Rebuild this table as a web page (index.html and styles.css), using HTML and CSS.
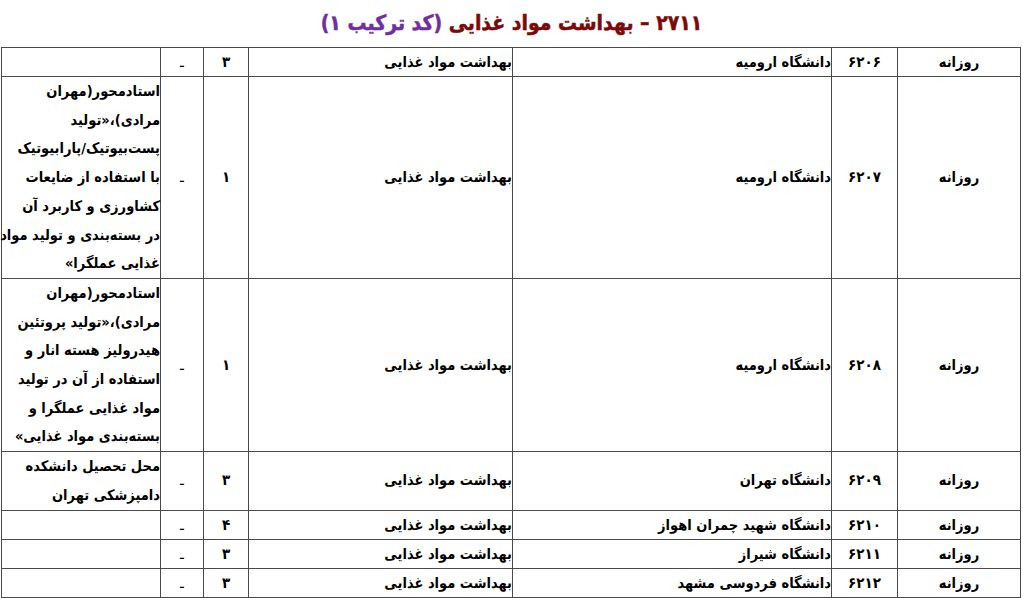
FILE: index.html
```html
<!DOCTYPE html>
<html lang="fa" dir="rtl">
<head>
<meta charset="utf-8">
<title>۲۷۱۱ – بهداشت مواد غذایی</title>
<link rel="stylesheet" href="styles.css">
</head>
<body>
<div class="page">
  <h1 class="title"><span class="title-main">۲۷۱۱ – بهداشت مواد غذایی</span> <span class="title-code">(کد ترکیب ۱)</span></h1>
  <table class="grid">
    <colgroup>
      <col class="c-type">
      <col class="c-code">
      <col class="c-uni">
      <col class="c-field">
      <col class="c-cap">
      <col class="c-dash">
      <col class="c-note">
    </colgroup>
    <tbody>
      <tr class="r-short">
        <td class="center">روزانه</td>
        <td class="center num">۶۲۰۶</td>
        <td class="start">دانشگاه ارومیه</td>
        <td class="start">بهداشت مواد غذایی</td>
        <td class="center num">۳</td>
        <td class="center dash">ـ</td>
        <td class="start note"></td>
      </tr>
      <tr>
        <td class="center">روزانه</td>
        <td class="center num">۶۲۰۷</td>
        <td class="start">دانشگاه ارومیه</td>
        <td class="start">بهداشت مواد غذایی</td>
        <td class="center num">۱</td>
        <td class="center dash">ـ</td>
        <td class="start note">استادمحور(مهران<br>مرادی)،«تولید<br>پست‌بیوتیک/پارابیوتیک<br>با استفاده از ضایعات<br>کشاورزی و کاربرد آن<br>در بسته‌بندی و تولید مواد<br>غذایی عملگرا»</td>
      </tr>
      <tr>
        <td class="center">روزانه</td>
        <td class="center num">۶۲۰۸</td>
        <td class="start">دانشگاه ارومیه</td>
        <td class="start">بهداشت مواد غذایی</td>
        <td class="center num">۱</td>
        <td class="center dash">ـ</td>
        <td class="start note">استادمحور(مهران<br>مرادی)،«تولید پروتئین<br>هیدرولیز هسته انار و<br>استفاده از آن در تولید<br>مواد غذایی عملگرا و<br>بسته‌بندی مواد غذایی»</td>
      </tr>
      <tr>
        <td class="center">روزانه</td>
        <td class="center num">۶۲۰۹</td>
        <td class="start">دانشگاه تهران</td>
        <td class="start">بهداشت مواد غذایی</td>
        <td class="center num">۳</td>
        <td class="center dash">ـ</td>
        <td class="start note">محل تحصیل دانشکده<br>دامپزشکی تهران</td>
      </tr>
      <tr class="r-short">
        <td class="center">روزانه</td>
        <td class="center num">۶۲۱۰</td>
        <td class="start">دانشگاه شهید چمران اهواز</td>
        <td class="start">بهداشت مواد غذایی</td>
        <td class="center num">۴</td>
        <td class="center dash">ـ</td>
        <td class="start note"></td>
      </tr>
      <tr class="r-short">
        <td class="center">روزانه</td>
        <td class="center num">۶۲۱۱</td>
        <td class="start">دانشگاه شیراز</td>
        <td class="start">بهداشت مواد غذایی</td>
        <td class="center num">۳</td>
        <td class="center dash">ـ</td>
        <td class="start note"></td>
      </tr>
      <tr class="r-short">
        <td class="center">روزانه</td>
        <td class="center num">۶۲۱۲</td>
        <td class="start">دانشگاه فردوسی مشهد</td>
        <td class="start">بهداشت مواد غذایی</td>
        <td class="center num">۳</td>
        <td class="center dash">ـ</td>
        <td class="start note"></td>
      </tr>
    </tbody>
  </table>
</div>
</body>
</html>
```

FILE: styles.css
```css
html, body {
  margin: 0;
  padding: 0;
  background: #ffffff;
}

body {
  font-family: "DejaVu Sans Condensed", "DejaVu Sans", sans-serif;
  color: #000;
}

.page {
  padding: 0 2px 0 2px;
}

.title {
  margin: 0;
  height: 47px;
  line-height: 46px;
  text-align: center;
  font-size: 21px;
  font-weight: bold;
  -webkit-text-stroke: 0.5px currentColor;
}

.title-main {
  color: #7a0a0a;
}

.title-code {
  color: #6f2f9f;
}

.grid {
  width: 1020px;
  border-collapse: collapse;
  table-layout: fixed;
  font-size: 14.5px;
  font-weight: bold;
}

.c-type { width: 123px; }
.c-code { width: 66px; }
.c-uni { width: 319px; }
.c-field { width: 264px; }
.c-cap { width: 45px; }
.c-dash { width: 43px; }
.c-note { width: 159px; }

.grid td {
  border: 1px solid #4a4a4a;
  padding: 0;
  vertical-align: middle;
  line-height: 28.7px;
  white-space: nowrap;
}

.r-short td {
  height: 28px;
  line-height: 26px;
}

.center {
  text-align: center;
}

.start {
  text-align: right;
}

.num {
  font-size: 15px;
  letter-spacing: 1px;
}

.dash {
  font-weight: normal;
}

.note {
  white-space: nowrap;
}
```
